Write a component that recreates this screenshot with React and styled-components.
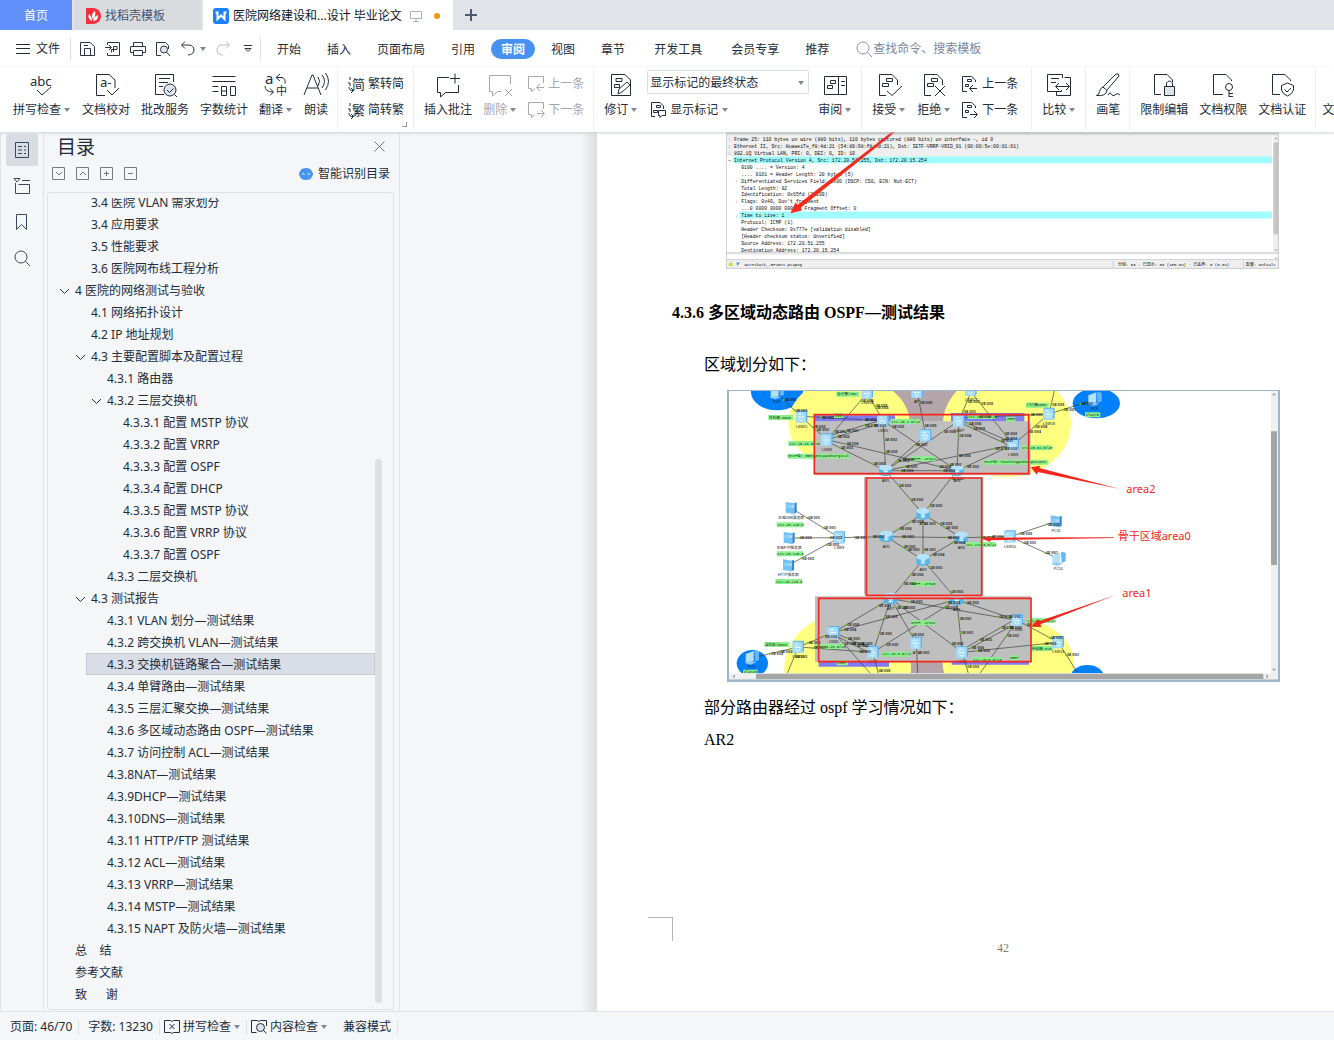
import React from 'react';
import styled, { createGlobalStyle } from 'styled-components';


const GlobalStyle = createGlobalStyle`
    * {
        box-sizing: border-box;
    }

    body {
        margin: 0;
        overflow: hidden;
        color: #232c3b;
        background: #f5f6f8;
        font: 12px/16px 'Noto Sans', 'Noto Sans CJK SC', sans-serif;
    }

    button, input, select {
        margin: 0;
        padding: 0;
        border: 0;
        color: inherit;
        background: none;
        font: inherit;
    }

    a {
        color: inherit;
        text-decoration: none;
    }
`

const AppWrapper = styled.div`
    display: flex;
    flex-direction: column;
    height: 100vh;
`

const Svg = styled.svg`
    display: block;
    flex: none;
    overflow: visible;
    fill: none;
    stroke: currentColor;

    text {
        fill: currentColor;
        stroke: none;
        font-family: 'Noto Sans', 'Noto Sans CJK SC', sans-serif;
    }
`

/* ---------- tab strip ---------- */

const TabStrip = styled.header`
    display: flex;
    flex: none;
    height: 30px;
    background: #e1e3e8;
`

const HomeTab = styled.button`
    width: 72px;
    margin-right: 2px;
    padding-top: 2px;
    color: #fff;
    background: #618ffb;
`

const Tab = styled.button`
    display: flex;
    align-items: center;
    gap: 4px;
    width: ${props => props.$active ? 250 : 127}px;
    margin-right: ${props => props.$active ? 0 : 2}px;
    padding-top: 2px;
    padding-left: ${props => props.$active ? 10 : 11}px;
    color: ${props => props.$active ? '#10151d' : '#48536a'};
    background: ${props => props.$active ? '#fff' : '#dadbdf'};
    white-space: nowrap;
`

const TabState = styled.span`
    display: flex;
    align-items: center;
    gap: 12px;
    margin-left: 4px;
    color: #a9b1c3;
`

const UnsavedDot = styled.span`
    width: 6px;
    height: 6px;
    border-radius: 50%;
    background: #ea9a0b;
`

const NewTab = styled.button`
    display: flex;
    align-items: center;
    justify-content: center;
    width: 36px;
    color: #4b5872;
`

/* ---------- menu bar ---------- */

const MenuBar = styled.nav`
    display: flex;
    flex: none;
    align-items: center;
    height: 37px;
    background: #fff;
    white-space: nowrap;
`

const FileButton = styled.button`
    display: flex;
    align-items: center;
    gap: 5px;
    height: 24px;
    padding: 0 10px 0 15px;
    border-right: 1px solid #dfe2e7;
`

const QuickBar = styled.div`
    display: flex;
    align-items: center;
    gap: 9px;
    height: 24px;
    padding: 0 4px 0 9px;
    border-right: 1px solid #dfe2e7;
`

const QuickButton = styled.button`
    display: flex;
    align-items: center;
    gap: 4px;
    color: ${props => props.$muted ? '#b9bcc2' : '#2c3646'};
`

const MenuList = styled.div`
    display: flex;
    gap: 6px;
    padding-left: 6px;
`

const MenuLink = styled.a`
    padding: 3px 10px 1px;
    padding-left: ${props => props.$wide ? 13 : 10}px;
    border-radius: 10px;
    color: ${props => props.$active ? '#fff' : 'inherit'};
    background: ${props => props.$active ? '#4691f2' : 'none'};
    font-weight: ${props => props.$active ? 700 : 400};
`

const SearchLabel = styled.label`
    display: flex;
    align-items: center;
    gap: 1px;
    margin-left: 17px;
    color: #8a93a8;

    input {
        width: 130px;
        padding-top: 1px;
        outline: none;
    }

    input::placeholder {
        color: #7c869d;
        opacity: 1;
    }
`

/* ---------- ribbon ---------- */

const RibbonWrapper = styled.section`
    position: relative;
    z-index: 1;
    display: flex;
    flex: none;
    height: 65px;
    padding-left: 3px;
    overflow: hidden;
    background: #fff;
    box-shadow: 0 1px 3px #c9ccd2;
    white-space: nowrap;
`

const Group = styled.div`
    position: relative;
    display: flex;
    flex: none;
    gap: ${props => props.$gap || 11}px;
    height: 62px;
    margin-top: 1px;
    padding: 0 ${props => props.$end || 9}px 0 ${props => props.$start || 10}px;
    border-right: 1px solid #eceef1;
`

const BigButton = styled.button`
    display: flex;
    flex-direction: column;
    align-items: center;
    gap: 5px;
    padding-top: 5px;
    color: ${props => props.$muted ? '#a6a8ad' : 'inherit'};
`

const ButtonLabel = styled.span`
    display: flex;
    align-items: center;
    gap: 3px;
    padding-right: ${props => props.$arrow ? 1 : 0}px;
`

const Stack = styled.div`
    display: flex;
    flex-direction: column;
    align-items: flex-start;
    gap: ${props => props.$select ? 7 : 10}px;
    padding-top: ${props => props.$select ? 2 : 7}px;
`

const SmallButton = styled.button`
    display: flex;
    align-items: center;
    gap: 4px;
    height: 18px;
    margin-bottom: -2px;
    padding-left: ${props => props.$indent ? 3 : 0}px;
    color: ${props => props.$muted ? '#a6a8ad' : 'inherit'};
`

const SelectBox = styled.label`
    display: flex;
    align-items: center;
    width: 162px;
    height: 24px;
    padding: 1px 4px 0 2px;
    border: 1px solid #d9dce1;
    border-radius: 2px;

    select {
        flex: 1;
        appearance: none;
        outline: none;
    }
`

const Corner = styled.span`
    position: absolute;
    right: 6px;
    bottom: 3px;
    width: 5px;
    height: 5px;
    border: solid #8b93a3;
    border-width: 0 1px 1px 0;
`

/* ---------- side rail and outline panel ---------- */

const Body = styled.div`
    display: flex;
    flex: 1;
    min-height: 0;
`

const Rail = styled.nav`
    display: flex;
    flex: none;
    flex-direction: column;
    gap: 4px;
    width: 44px;
    padding: 2px 5px;
    border: solid #e0e3e9;
    border-width: 0 1px;
`

const RailButton = styled.button`
    display: flex;
    align-items: center;
    justify-content: center;
    width: 32px;
    height: 32px;
    border-radius: 2px;
    color: #3b475d;
    background: ${props => props.$active ? '#d8dde4' : 'none'};
`

const Panel = styled.aside`
    display: flex;
    flex: none;
    flex-direction: column;
    width: 356px;
    padding: 0 5px 0 3px;
    border-right: 1px solid #e0e3e9;
`

const PanelHead = styled.div`
    display: flex;
    align-items: center;
    justify-content: space-between;
    height: 29px;
    padding: 0 9px 0 10px;

    h2 {
        margin: 0;
        font-size: 19px;
        font-weight: 400;
        line-height: 28px;
    }
`

const PanelTools = styled.div`
    display: flex;
    align-items: center;
    gap: 11px;
    height: 31px;
    padding: 0 4px 6px 5px;
`

const SmartButton = styled.button`
    display: flex;
    align-items: center;
    gap: 5px;
    margin-left: auto;
    padding-top: 1px;
`

const OutlineBox = styled.div`
    display: flex;
    flex: 1;
    min-height: 0;
    margin-bottom: 1px;
    padding: 5px 11px 6px 10px;
    border: 1px solid #dfe2e8;
    border-radius: 3px;
`

const OutlineScroll = styled.div`
    flex: 1;
    overflow: hidden;
`

const OutlineList = styled.ul`
    margin: -7px 0 0;
    padding: 0;
    list-style: none;
`

const OutlineRow = styled.li`
    display: flex;
    align-items: center;
    gap: 6px;
    height: 22px;
    margin-left: ${props => props.$level * 16 - 20}px;
    padding: 2px 0 0 5px;
    border: 1px solid ${props => props.$active ? '#c5cad3' : 'transparent'};
    background: ${props => props.$active ? '#d9dde5' : 'none'};
    white-space: pre;
`

const Chevron = styled.button`
    width: 9px;
    height: 16px;
`

const ChevronSlot = styled.span`
    width: 9px;
`

const ScrollTrack = styled.div`
    flex: none;
    width: 7px;
    padding-top: 261px;
`

const ScrollThumb = styled.div`
    height: 100%;
    border-radius: 4px;
    background: #dddfe2;
`

/* ---------- document ---------- */

const Canvas = styled.main`
    display: flex;
    flex: 1;
    min-width: 0;
    overflow: hidden;
    background: #f5f6f8;
`

const Gutter = styled.div`
    flex: none;
    width: 197px;
    background: linear-gradient(to right, #f5f6f8 180px, #dcdee2 197px);
`

const Page = styled.article`
    flex: 1;
    min-width: 0;
    padding-left: 75px;
    overflow: hidden;
    color: #000;
    background: #fff;
    font: 16px/32px 'Liberation Serif', 'Noto Sans CJK SC', serif;

    h3 {
        margin: 28px 0 20px;
        font-size: 16px;
        line-height: 32px;
    }

    p {
        margin: 0;
        padding-left: 32px;
    }
`

const Figure = styled.figure`
    margin: ${props => props.$top ? 0 : 9}px 0 ${props => props.$top ? 0 : 10}px ${props => props.$top ? 54 : 55}px;

    svg {
        display: block;
        width: 553px;
    }
`

const PageFooter = styled.footer`
    margin-top: 161px;
    color: #7a7a7a;
    font-size: 12px;
    line-height: 14px;
    text-align: center;
`

const CropMark = styled.div`
    width: 25px;
    height: 24px;
    margin-left: -24px;
    border: solid #b4b4b4;
    border-width: 1px 1px 0 0;
`

/* ---------- status bar ---------- */

const StatusBar = styled.footer`
    display: flex;
    flex: none;
    align-items: center;
    height: 29px;
    padding: 2px 0 0 1px;
    border-top: 1px solid #dfe2e8;
    background: #f5f6f8;
    white-space: nowrap;
`

const StatusItem = styled.button`
    display: flex;
    align-items: center;
    gap: 3px;
    height: 15px;
    padding: 0 6px 0 ${props => props.$icon ? 4 : 9}px;
    border-right: 1px solid ${props => props.$open ? 'transparent' : '#dfe2e8'};
`


const DOC = 'M9 22.5H2.5V1.5H15L20.5 7V12';
const BOXES = 'M9.5 5.5h6v3h-6zM5.5 10.5h6v3h-6z';
const TURN = 'M2 1v3M0 7h2v3M1 11q0 4 4 3.500M3 12l2.500 2.500L3 17';

const bigIcons = {
    spell: <><text x="0" y="13" fontSize="13">abc</text><path d="M7 17l5 5 9-8" /></>,
    proof: <><path d="M11 22.5H2.5V1.5H15L21 7v8M13 17l5 5 7-7" /><text x="6" y="14" fontSize="13">a-</text></>,
    correct: (
        <>
            <path d="M11 21.5H2.5V1.5H20.5V9M6 5.5h11M6 9.5h9M6 13.5h4" />
            <circle cx="17" cy="17" r="6" fill="#dfe3ea" />
            <path d="M21.5 21.5L24 24M14 17l2.5 2.5 4-4" />
        </>
    ),
    count: <path d="M.5 3.5h23M.5 8.5h23M.5 13.5h6M.5 18.5h6M9.5 13.5h5v9h-5zM9.5 18h5M18.5 13.5h5v9h-5z" />,
    translate: (
        <>
            <text x="1" y="11" fontSize="15">a</text>
            <text x="12" y="22" fontSize="11">中</text>
            <path d="M16 1l-4 3.5 4 3.5M12.5 4.5H18q4 1 3 6M1 13q0 6 8 6M6 15.5l3.5 3.5L6 22.5" />
        </>
    ),
    read: <path d="M0 22L8 2h1l8 20M3 15h11M14 4q3 4 0 9M18 2q5 6 0 13M21.5 0q6 8 0 17" />,
    comment: <path d="M13 4.5H1.5V19.5H4.5V24L9.5 19.5H22.5V12M14 5.5h10M19 .5v10" />,
    remove: <path d="M22.5 11V2.5H1.5V18.5H4.5V23L9.5 18.5H13M17 16l7 7M24 16l-7 7" />,
    revise: (
        <>
            <path d="M2.5 1.5H16L21.5 7V22.5H2.5zM7 5.5h6v3H7zM5.5 11.5h5v3h-5z" />
            <path d="M9 21l1-5 8-7 3 3-8 7z" fill="#fff" />
        </>
    ),
    pane: <path d="M1.5 3.5h22v18h-22zM15.5 3.5v18M18 8.5h4M18 12.5h4M7.5 7.5h5v3h-5zM4.5 12.5h5v3h-5z" />,
    accept: <path d={`${DOC}${BOXES}M10 18l5 4.5L25 13`} />,
    reject: <path d={`${DOC}${BOXES}M13 13l10 10M23 13L13 23`} />,
    compare: (
        <path d="M14.5 17v1.5H.5V1.5h15V5M9.5 19v3.5h14V4.5h-6M4 5.5h8M4 9.5h5M9 13.5h13M12 10l-3.5 3.5L12 17M19 10l3.5 3.5L19 17" />
    ),
    brush: <path d="M7 14L20 1q3-1 3 2L11 17M7 14l4 3.5q-1 6-10.5 5 3-1 3-4 1-4 3.5-4.5zM12 22q2-4 4 0 2 2 4-1 2-1 4 1" />,
    lock: (
        <>
            <path d="M9 21.5H2.5V1.5H15L20.5 7V9" />
            <path d="M12.5 13.5h10v9h-10z" fill="#dfe3ea" />
            <path d="M14.5 13V10q3-4 6 0v3" />
        </>
    ),
    key: (
        <>
            <path d="M12 21.5H2.5V1.5H15L20.5 7V8" />
            <circle cx="18" cy="14" r="3.5" />
            <path d="M18 17.5V24M18 20.5h4M18 23.5h4" />
        </>
    ),
    shield: <path d="M10 21.5H2.5V1.5H15L20.5 7V8M17.5 10l6 2.5V17q-1 4-6 6-5-2-6-6v-4.5zM14.5 16.5l2.5 2.5 4-4" />,
    finalize: <path d={DOC} />,
}

const smallIcons = {
    toSimple: <><text x="4" y="13" fontSize="13">简</text><path d={TURN} /></>,
    toTraditional: <><text x="4" y="13" fontSize="13">繁</text><path d={TURN} /></>,
    prevNote: <path d="M15.5 7V.5H.5v12h3v3l3.5-3M16 11.5H9M12 8l-3.5 3.5L12 15" />,
    nextNote: <path d="M15.5 7V.5H.5v12h3v3l3.5-3M9 11.5h7M13 8l3.5 3.5L13 15" />,
    marks: <path d="M5 14.5H1.5V.5H10L13.5 4v3M6.5 3.5h4v2h-4zM3.5 8.5h4v2h-4zM8.5 8.5h7v5H12l-2 2v-2H8.5z" />,
    prev: <path d="M5 15.5H.5V.5H9.5L13.5 4v2M5.5 3.5h4v2h-4zM3.5 8.5h3v2h-3zM15 12.5H8M11 9l-3.5 3.5L11 16" />,
    next: <path d="M5 15.5H.5V.5H9.5L13.5 4v2M5.5 3.5h4v2h-4zM3.5 8.5h3v2h-3zM8 12.5h7M12 9l3.5 3.5L12 16" />,
    save: <path d="M.5 14.5V1.5H10l4.500 4v9H.5zM4.5 14V7.5h6V14M4 4.5h4" />,
    exportPdf: <path d="M2.5 4V1.5h12v13h-12V12M0 6.5h6M4 4l2.5 2.5L4 9M8.5 11V5.5h3.5v3H6.5v3" />,
    print: <path d="M3.5 5.5v-4h9v4M3.5 11.5h-3v-6h15v6h-3M3.5 9.5h9v5h-9z" />,
    preview: (
        <>
            <path d="M6 14.5H1.5V1.5h9l3 3V8" />
            <circle cx="9" cy="8.5" r="3.5" fill="#dfe3ea" />
            <path d="M11.5 11l3.5 4" />
        </>
    ),
    undo: <path d="M5 .5L1.5 4 5 7.5M2 4h7q5 .5 5 5t-6 5" />,
    redo: <path d="M11 .5L14.5 4 11 7.5M14 4H7q-5 .5-5 5t6 5" />,
    spellBook: <path d="M8 2.5L6.5 1.5H.5v12h6l1.5 1 1.5-1h6v-12h-6zM5.5 5l5 5M10.5 5l-5 5" />,
    contentBook: (
        <>
            <path d="M15.5 7V1.5h-6L8 2.5 6.5 1.5H.5v12h5" />
            <circle cx="9.5" cy="8.5" r="4" fill="#dfe3ea" />
            <path d="M12.5 11.5l3 3" />
        </>
    ),
    outline: <path d="M1.5.5h13v15h-13zM4 4.5h4M10 4.5h2M4 8h4M10 8h2M4 11.5h4M10 11.5h2" />,
    chapters: <path d="M0 .5h6L3 4zM8 2.5h8M1.5 5v10.5h14v-9h-11" />,
    bookmark: <path d="M2.5.5h10v15l-5-5-5 5z" />,
    search: <><circle cx="7" cy="7" r="6" /><path d="M11.5 11.5L16 16" /></>,
}

const Icon = ({ name }) => (
    <Svg
        width={bigIcons[name] ? 24 : 16}
        height={bigIcons[name] ? 24 : 16}
        viewBox={bigIcons[name] ? '0 0 24 24' : '0 0 16 16'}
        aria-hidden="true"
    >
        {bigIcons[name] || smallIcons[name]}
    </Svg>
)

const Arrow = () => (
    <Svg width="6" height="4" viewBox="0 0 6 4" aria-hidden="true">
        <path d="M0 0h6L3 4z" fill="#7d879b" stroke="none" />
    </Svg>
)

const Big = ({ icon, label, arrow, muted }) => (
    <BigButton $muted={muted}>
        <Icon name={icon} />
        <ButtonLabel $arrow={arrow}>{label}{arrow && <Arrow />}</ButtonLabel>
    </BigButton>
)

const Small = ({ icon, label, arrow, muted, indent }) => (
    <SmallButton $muted={muted} $indent={indent}>
        <Icon name={icon} />{label}{arrow && <Arrow />}
    </SmallButton>
)

const menus = [
    ['开始'], ['插入'], ['页面布局'], ['引用'], ['审阅'], ['视图'],
    ['章节'], ['开发工具', true], ['会员专享', true], ['推荐'],
]

// [level, title, expandable]
const outline = [
    [2, '3.4 医院 VLAN 需求划分'],
    [2, '3.4 应用要求'],
    [2, '3.5 性能要求'],
    [2, '3.6 医院网布线工程分析'],
    [1, '4 医院的网络测试与验收', true],
    [2, '4.1 网络拓扑设计'],
    [2, '4.2 IP 地址规划'],
    [2, '4.3 主要配置脚本及配置过程', true],
    [3, '4.3.1 路由器'],
    [3, '4.3.2 三层交换机', true],
    [4, '4.3.3.1 配置 MSTP 协议'],
    [4, '4.3.3.2 配置 VRRP'],
    [4, '4.3.3.3 配置 OSPF'],
    [4, '4.3.3.4 配置 DHCP'],
    [4, '4.3.3.5 配置 MSTP 协议'],
    [4, '4.3.3.6 配置 VRRP 协议'],
    [4, '4.3.3.7 配置 OSPF'],
    [3, '4.3.3 二层交换机'],
    [2, '4.3 测试报告', true],
    [3, '4.3.1 VLAN 划分—测试结果'],
    [3, '4.3.2 跨交换机 VLAN—测试结果'],
    [3, '4.3.3 交换机链路聚合—测试结果'],
    [3, '4.3.4 单臂路由—测试结果'],
    [3, '4.3.5 三层汇聚交换—测试结果'],
    [3, '4.3.6 多区域动态路由 OSPF—测试结果'],
    [3, '4.3.7 访问控制 ACL—测试结果'],
    [3, '4.3.8NAT—测试结果'],
    [3, '4.3.9DHCP—测试结果'],
    [3, '4.3.10DNS—测试结果'],
    [3, '4.3.11 HTTP/FTP 测试结果'],
    [3, '4.3.12 ACL—测试结果'],
    [3, '4.3.13 VRRP—测试结果'],
    [3, '4.3.14 MSTP—测试结果'],
    [3, '4.3.15 NAPT 及防火墙—测试结果'],
    [1, '总    结'],
    [1, '参考文献'],
    [1, '致      谢'],
]
const ACTIVE_ROW = 21;

const packet = [
    [0, 'Frame 25: 110 bytes on wire (880 bits), 110 bytes captured (880 bits) on interface -, id 0', 1],
    [0, 'Ethernet II, Src: HuaweiTe_f8:4d:21 (54:89:98:f8:4d:21), Dst: IETF-VRRP-VRID_01 (00:00:5e:00:01:01)', 1],
    [0, '802.1Q Virtual LAN, PRI: 0, DEI: 0, ID: 10', 1],
    [0, 'Internet Protocol Version 4, Src: 172.20.51.255, Dst: 172.20.15.254', 2],
    [1, '0100 .... = Version: 4'],
    [1, '.... 0101 = Header Length: 20 bytes (5)'],
    [1, 'Differentiated Services Field: 0x00 (DSCP: CS0, ECN: Not-ECT)', 1],
    [1, 'Total Length: 92'],
    [1, 'Identification: 0x65fd (26109)'],
    [1, "Flags: 0x40, Don't fragment", 1],
    [1, '...0 0000 0000 0000 = Fragment Offset: 0'],
    [1, 'Time to Live: 1', 1],
    [1, 'Protocol: ICMP (1)'],
    [1, 'Header Checksum: 0x777e [validation disabled]'],
    [1, '[Header checksum status: Unverified]'],
    [1, 'Source Address: 172.20.51.255'],
    [1, 'Destination Address: 172.20.15.254'],
]

const PacketCapture = () => (
    <svg viewBox="0 0 2765 685" fontFamily="'Liberation Mono', 'Noto Sans CJK SC', monospace" fontSize="24" fill="#0c0c0c">
        <path d="M0 0h2765v685H0z" fill="#fff" />
        <path d="M0 0h2765v14H0z" fill="#c4c4c4" />
        <path d="M0 14h2730v108H0zM2735 14h30v590h-30zM0 602h2765v12H0zM0 640h2765v42H0z" fill="#efefef" />
        <path d="M2737 52h26v460h-26z" fill="#c6c6c6" />
        <path d="M35 122h2695v34H35zM68 398h2662v34H68z" fill="#9ffcff" />
        <path d="M2 0v682M2762 0v682M0 604h2765M0 638h2765M0 682h2765" stroke="#c2c2c2" strokeWidth="4" />
        {packet.map(([level, line, mark], i) => {
            const y = 46 + i * 34.5;
            const x = level ? 50 : 14;
            return (
                <g key={line}>
                    {mark === 1 && <path d={`M${x} ${y - 14}l6 7-6 7`} fill="none" stroke="#888" strokeWidth="2" />}
                    {mark === 2 && <path d={`M${x - 2} ${y - 10}l6 7 6-7`} fill="none" stroke="#444" strokeWidth="3" />}
                    <text x={level ? 76 : 40} y={y}>{line}</text>
                </g>
            );
        })}
        <path d="M846 0L372 380 380 392 322 406 348 352 358 364 828 0z" fill="#f22b1d" />
        <circle cx="24" cy="661" r="10" fill="#d9d44a" />
        <path d="M52 652h18l-14 18z" fill="#5793c8" />
        <g fontSize="20">
            <text x="92" y="669">wireshark_-RP1BY1.pcapng</text>
            <text x="1960" y="669">分组: 66 · 已显示: 66 (100.0%) · 已丢弃: 0 (0.0%)</text>
            <text x="2600" y="669">配置: Default</text>
        </g>
        <path d="M1936 646v32M2588 646v32" stroke="#bbb" strokeWidth="3" />
        <path d="M2744 36l6-7 6 7M2744 586l6 7 6-7M2744 626l6 7 6-7" fill="none" stroke="#666" strokeWidth="3" />
    </svg>
)

// [x1, y1, x2, y2]
const links = [
    [155, 15, 230, 88], [230, 88, 306, 155], [230, 85, 474, 98], [427, 15, 306, 155], [427, 15, 474, 98],
    [306, 145, 474, 95], [306, 155, 474, 105], [306, 160, 482, 248], [306, 155, 696, 248], [577, 14, 602, 142],
    [602, 142, 482, 248], [474, 98, 482, 248], [474, 98, 696, 248], [702, 98, 696, 248], [702, 98, 482, 248],
    [738, 12, 702, 98], [738, 12, 865, 170], [702, 90, 972, 78], [702, 95, 865, 165], [702, 102, 865, 178],
    [865, 170, 482, 248], [865, 170, 696, 248], [482, 248, 696, 248], [865, 170, 972, 78], [972, 78, 990, 0],
    [972, 78, 1108, 35], [482, 248, 594, 378], [696, 248, 594, 378], [594, 378, 484, 446], [594, 378, 709, 449],
    [594, 378, 594, 516], [484, 446, 709, 449], [484, 446, 594, 516], [709, 449, 594, 516], [343, 449, 484, 446],
    [198, 360, 343, 449], [192, 450, 343, 449], [190, 532, 343, 449], [709, 449, 855, 446], [855, 446, 993, 400],
    [855, 446, 1000, 512], [594, 516, 497, 632], [594, 516, 695, 635], [497, 632, 326, 733], [497, 632, 444, 793],
    [497, 632, 574, 765], [497, 632, 712, 793], [497, 632, 877, 697], [695, 635, 326, 733], [695, 635, 444, 793],
    [695, 635, 712, 793], [695, 635, 877, 697], [326, 733, 444, 785], [326, 740, 444, 800], [326, 733, 220, 777],
    [220, 777, 444, 793], [220, 777, 80, 810], [220, 777, 187, 856], [326, 733, 436, 856], [444, 793, 460, 856],
    [574, 765, 578, 856], [712, 793, 730, 856], [712, 785, 877, 690], [712, 793, 877, 705], [712, 793, 1000, 763],
    [877, 697, 765, 856], [877, 697, 1000, 763], [1000, 763, 1056, 852],
]

// [kind, x, y, label]
const nodes = [
    ['pc', 155, 12, 'PC6'], ['switch', 230, 86, 'LSW15'], ['switch', 306, 155, 'LSW6'], ['switch', 427, 15, 'LSW16'],
    ['switch', 474, 98, 'LSW5'], ['switch', 577, 12, 'AP1'], ['switch', 602, 142, ''], ['switch', 702, 98, 'LSW7'],
    ['switch', 738, 6, 'LSW17'], ['router', 482, 248, 'AR5'], ['router', 696, 248, 'AR6'], ['router', 594, 378, 'AR2'],
    ['switch', 972, 78, 'LSW18'], ['switch', 865, 170, 'LSW8'], ['pc', 1108, 32, 'PC9'], ['server', 198, 360, '本地DNS服务器'],
    ['server', 192, 450, '本地FTP服务器'], ['server', 190, 532, 'HTTP服务器'], ['switch', 343, 449, 'LSW9'],
    ['router', 484, 446, 'AR1'], ['router', 709, 449, 'AR4'], ['router', 594, 516, 'AR3'], ['router', 497, 632, 'AR7'],
    ['router', 695, 635, 'AR8'], ['switch', 326, 733, 'LSW1'], ['switch', 444, 793, 'LSW2'], ['switch', 574, 765, 'AC1'],
    ['switch', 712, 793, 'LSW3'], ['switch', 220, 777, 'LSW11'], ['pc', 80, 808, 'PC1'], ['server', 993, 400, 'PC31'],
    ['switch', 855, 446, 'LSW10'], ['pc', 1000, 512, 'PC10'], ['switch', 877, 697, 'LSW4'], ['switch', 1000, 763, 'LSW14'],
]

// [x, y, width, text]
const tags = [
    [334, 11, 68, '急诊楼/254'], [130, 81, 74, '外科楼:8888'], [327, 75, 28, 'VRRP'], [497, 93, 88, '172.20.2.0/24'],
    [190, 159, 90, '172.20.16.0/20'], [188, 197, 184, 'MSTP组: EmergencyAndSurgical'], [557, 205, 74, 'OSPF: area2'],
    [728, 78, 82, '172.20.7.0/24'], [776, 215, 46, 'MSTP组:'], [824, 215, 146, 'TeachingAndOutpatient'], [903, 44, 68, '门诊楼8888'],
    [843, 86, 28, 'VRRP'], [888, 172, 92, '172.20.32.0/20'], [1080, 73, 46, 'vlan70'], [155, 403, 80, '172.20.220.5'],
    [155, 490, 80, '172.20.220.6'], [151, 573, 80, '172.20.220.5'], [720, 462, 92, '111.211.0.5/24'], [557, 580, 74, 'OSPF: area0'],
    [557, 697, 74, 'OSPF: area1'], [118, 762, 74, '全科区/6888'], [268, 768, 88, '172.20.48.0/20'], [470, 791, 86, '172.20.8.0/21'],
    [335, 817, 34, 'VRRP'], [742, 807, 86, '172.20.0.0/23'], [852, 802, 28, 'VRRP'], [905, 690, 84, '172.20.4.0/22'],
    [918, 774, 66, '传染楼:816'], [54, 845, 44, 'vlan10'],
]

const Node = ({ kind, x, y, label }) => (
    <g transform={`translate(${x} ${y})`}>
        {kind === 'router' && (
            <g>
                <path d="M-20-9v20q20 12 40 0V-9z" fill="#55b4e8" />
                <ellipse cy="-9" rx="20" ry="9" fill="#b4e4fb" />
                <path d="M-7 3h14M0-3v14M-7 9h14" stroke="#e6f8ff" strokeWidth="3" />
            </g>
        )}
        {kind === 'switch' && (
            <g>
                <path d="M-18-16l5-3h30v30l-4 7z" fill="#5fb1ea" />
                <path d="M-18-16h31v34h-31z" fill="#a3dcfa" />
                <path d="M-11-5l6-5 6 5M-8 7l6 5 7-5M-11 1h18" fill="none" stroke="#f2fcff" strokeWidth="3" />
            </g>
        )}
        {kind === 'server' && (
            <g>
                <path d="M-16-18l26 4v32l-26-4z" fill="#72c2f5" />
                <path d="M10-14l7-3v30l-7 5z" fill="#2f86d6" />
                <text x="-3" y="1" fontSize="10" textAnchor="middle" fill="#e9f7ff">.COM</text>
            </g>
        )}
        {kind === 'pc' && (
            <g>
                <path d="M-18-10l24-9v30l-24 6z" fill="#b5e2fa" />
                <path d="M8-21l14 3v26l-12 5z" fill="#68b5ef" />
                <path d="M-22 16l18-5 18 4-18 7z" fill="#8fcbf3" />
            </g>
        )}
        <text y="33" fontSize="11" textAnchor="middle" fill="#111">{label}</text>
    </g>
)

const Topology = () => (
    <svg viewBox="6 6 1659 876" fontFamily="'Liberation Sans', 'Noto Sans CJK SC', sans-serif">
        <clipPath id="map"><path d="M12 9h1626v847H12z" /></clipPath>
        <path d="M6 6h1659v876H6z" fill="#9eb6c9" />
        <path d="M12 9h1647v865H12z" fill="#fff" />
        <g clipPath="url(#map)">
            <ellipse cx="156" cy="12" rx="78" ry="55" fill="#0080fb" />
            <path d="M490 6h230v95H490zM540 815h130v45H540z" fill="#b3a5aa" />
            <ellipse cx="372" cy="105" rx="182" ry="139" fill="#ffff80" />
            <ellipse cx="846" cy="108" rx="192" ry="160" fill="#ffff80" />
            <ellipse cx="368" cy="840" rx="190" ry="165" fill="#ffff80" />
            <ellipse cx="850" cy="825" rx="197" ry="140" fill="#ffff80" />
            <ellipse cx="82" cy="826" rx="47" ry="40" fill="#0080fb" />
            <ellipse cx="1114" cy="46" rx="71" ry="45" fill="#0080fb" />
            <ellipse cx="1087" cy="866" rx="50" ry="35" fill="#0080fb" />
            <path d="M268 100h649v162H268zM417 267h358v353H417zM270 625h648v197H270z" fill="#bfbfbf" />
            <path d="M268 82h242v18H268zM678 75h220v25H678zM281 822h211v14H281zM680 822h232v8H680z" fill="#7f7cf5" />
            <g stroke="#3a3a3a" strokeWidth="2">
                {links.map(([x1, y1, x2, y2], i) => <path key={i} d={`M${x1} ${y1}L${x2} ${y2}`} />)}
            </g>
            {tags.map(([x, y, width, text]) => (
                <g key={`${x}-${y}`}>
                    <path d={`M${x} ${y}h${width}v15h${-width}z`} fill="#8af08c" />
                    <text x={x + 2} y={y + 11} fontSize="11" fontFamily="'Liberation Mono', 'Noto Sans CJK SC', monospace" fill="#142814">
                        {text}
                    </text>
                </g>
            ))}
            {nodes.map(([kind, x, y, label]) => <Node key={`${x}-${y}`} kind={kind} x={x} y={y} label={label} />)}
            {links.map(([x1, y1, x2, y2], i) => {
                const reach = (30 + i % 3 * 14) / Math.hypot(x2 - x1, y2 - y1);
                // stubs that leave the map only carry the port at the device end
                const ends = y2 > 850 || y2 === 0 ? [reach] : [reach, 1 - reach];
                return ends.map(t => {
                    const x = Math.round(x1 + (x2 - x1) * t);
                    const y = Math.round(y1 + (y2 - y1) * t);
                    return (
                        <g key={`${i}-${t}`}>
                            <text x={x + 3} y={y + 4} fontSize="9" fontWeight="700" fill="#151515">GE 0/0/{i % 5 + 1}</text>
                            <circle cx={x} cy={y} r="3" fill="#6cc52c" />
                        </g>
                    );
                });
            })}
            <path d="M268 80h643v177H268zM424 270h346v352H424zM281 631h637v190H281z" fill="none" stroke="#f5261c" strokeWidth="5" />
            <g fill="#f5261c">
                <path d="M917 238l28-5-2 7 242 63-246-51-3 8zM772 453l24-9v5l370-1v2l-370 7v5zM919 716l19-23 4 7 230-79-226 88 3 8z" />
                <g fontFamily="'Noto Sans', 'Noto Sans CJK SC', sans-serif" fontSize="33">
                    <text x="1204" y="316">area2</text>
                    <text x="1178" y="457">骨干区域area0</text>
                    <text x="1192" y="628">area1</text>
                </g>
            </g>
        </g>
        <path d="M1638 9h21v847h-21zM12 856h1647v18H12z" fill="#f0f0f0" />
        <path d="M1638 130h18v401h-18zM93 857h1522v16H93z" fill="#a5a5a5" />
        <path d="M1643 22l4-5 4 5M1643 842l4 5 4-5M30 861l-5 4 5 4M1624 861l5 4-5 4" fill="none" stroke="#444" strokeWidth="2" />
    </svg>
)


export default class App extends React.Component {

    state = {
        view: '显示标记的最终状态',
    }

    handleView = (event) => {
        this.setState({ view: event.target.value });
    }

    renderTabs() {
        return (
            <TabStrip>
                <HomeTab>首页</HomeTab>
                <Tab>
                    <Svg width="16" height="16" viewBox="0 0 16 16">
                        <path d="M1 0h7a8 8 0 010 16H1z" fill="#f6303b" stroke="none" />
                        <path d="M7 13C3 11 3 8 4 6c2 2 3 4 3 7zM7.5 11C6 7 8 4 10 3c1 3 0 6-2.5 8zM8 13c0-3 2-5 5-6 0 3-1 6-5 6z" fill="#fff" stroke="none" />
                    </Svg>
                    找稻壳模板
                </Tab>
                <Tab $active>
                    <Svg width="16" height="16" viewBox="0 0 16 16">
                        <rect width="16" height="16" rx="3" fill="#1c82f8" stroke="none" />
                        <path d="M2.5 4.5H4.500V11L8 7.5 11.5 11V4.5h2" stroke="#fff" strokeWidth="2" />
                    </Svg>
                    医院网络建设和...设计 毕业论文
                    <TabState>
                        <Svg width="12" height="12" viewBox="0 0 12 12">
                            <path d="M.5 1.5h11v7H.5zM6 8.5v3M3 11.5h6" />
                        </Svg>
                        <UnsavedDot />
                    </TabState>
                </Tab>
                <NewTab aria-label="新建">
                    <Svg width="12" height="12" viewBox="0 0 12 12" strokeWidth="2"><path d="M6 0v12M0 6h12" /></Svg>
                </NewTab>
            </TabStrip>
        );
    }

    renderMenu() {
        return (
            <MenuBar>
                <FileButton>
                    <Svg width="16" height="12" viewBox="0 0 16 12"><path d="M1 1.5h14M1 5.5h14M1 10.5h14" /></Svg>
                    文件
                </FileButton>
                <QuickBar>
                    <QuickButton aria-label="保存"><Icon name="save" /></QuickButton>
                    <QuickButton aria-label="输出为PDF"><Icon name="exportPdf" /></QuickButton>
                    <QuickButton aria-label="打印"><Icon name="print" /></QuickButton>
                    <QuickButton aria-label="打印预览"><Icon name="preview" /></QuickButton>
                    <QuickButton aria-label="撤销"><Icon name="undo" /><Arrow /></QuickButton>
                    <QuickButton aria-label="恢复" $muted><Icon name="redo" /></QuickButton>
                    <QuickButton aria-label="更多">
                        <Svg width="16" height="8" viewBox="0 0 16 8"><path d="M4 .5h8M5 3.5h6l-3 3z" /></Svg>
                    </QuickButton>
                </QuickBar>
                <MenuList>
                    {menus.map(([label, wide]) => (
                        <MenuLink key={label} href="#ribbon" $wide={wide} $active={label === '审阅'}>{label}</MenuLink>
                    ))}
                </MenuList>
                <SearchLabel>
                    <Icon name="search" />
                    <input type="text" placeholder="查找命令、搜索模板" aria-label="查找命令、搜索模板" />
                </SearchLabel>
            </MenuBar>
        );
    }

    renderRibbon() {
        return (
            <RibbonWrapper id="ribbon">
                <Group>
                    <Big icon="spell" label="拼写检查" arrow />
                    <Big icon="proof" label="文档校对" />
                    <Big icon="correct" label="批改服务" />
                    <Big icon="count" label="字数统计" />
                    <Big icon="translate" label="翻译" arrow />
                    <Big icon="read" label="朗读" />
                </Group>
                <Group>
                    <Stack>
                        <Small icon="toSimple" label="繁转简" />
                        <Small icon="toTraditional" label="简转繁" />
                    </Stack>
                    <Corner />
                </Group>
                <Group>
                    <Big icon="comment" label="插入批注" />
                    <Big icon="remove" label="删除" arrow muted />
                    <Stack>
                        <Small icon="prevNote" label="上一条" muted />
                        <Small icon="nextNote" label="下一条" muted />
                    </Stack>
                </Group>
                <Group $gap={9}>
                    <Big icon="revise" label="修订" arrow />
                    <Stack $select>
                        <SelectBox>
                            <select aria-label="显示状态" value={this.state.view} onChange={this.handleView}>
                                <option>显示标记的最终状态</option>
                                <option>最终状态</option>
                            </select>
                            <Arrow />
                        </SelectBox>
                        <Small icon="marks" label="显示标记" arrow indent />
                    </Stack>
                    <Big icon="pane" label="审阅" arrow />
                </Group>
                <Group $end={13}>
                    <Big icon="accept" label="接受" arrow />
                    <Big icon="reject" label="拒绝" arrow />
                    <Stack>
                        <Small icon="prev" label="上一条" />
                        <Small icon="next" label="下一条" />
                    </Stack>
                </Group>
                <Group>
                    <Big icon="compare" label="比较" arrow />
                </Group>
                <Group>
                    <Big icon="brush" label="画笔" />
                </Group>
                <Group>
                    <Big icon="lock" label="限制编辑" />
                    <Big icon="key" label="文档权限" />
                    <Big icon="shield" label="文档认证" />
                </Group>
                <Group $start={6}>
                    <Big icon="finalize" label="文档定稿" />
                </Group>
            </RibbonWrapper>
        );
    }

    renderOutline() {
        return (
            <Panel>
                <PanelHead>
                    <h2>目录</h2>
                    <button aria-label="关闭">
                        <Svg width="11" height="11" viewBox="0 0 11 11"><path d="M.5.5l10 10M10.5.5l-10 10" stroke="#6d7686" /></Svg>
                    </button>
                </PanelHead>
                <PanelTools>
                    {[['展开', 'M4 5l3 3 3-3'], ['收起', 'M4 8l3-3 3 3'], ['增加', 'M4 6.5h5M6.5 4v5'], ['减少', 'M4 6.5h5']].map(([label, d]) => (
                        <button key={label} aria-label={label}>
                            <Svg width="13" height="13" viewBox="0 0 13 13">
                                <path d={`M.5.5h12v12H.5z${d}`} stroke="#737a86" />
                            </Svg>
                        </button>
                    ))}
                    <SmartButton>
                        <Svg width="14" height="12" viewBox="0 0 14 12">
                            <path d="M7 0q5 0 6 3.500 2 2.500 0 5Q12 12 7 12T1 8.500q-2-2.500 0-5Q2 0 7 0z" fill="#4a94f1" stroke="none" />
                            <path d="M3 6.500q1-2 2.500 0M8.500 6.500q1.500-2 2.500 0" stroke="#fff" />
                        </Svg>
                        智能识别目录
                    </SmartButton>
                </PanelTools>
                <OutlineBox>
                    <OutlineScroll>
                        <OutlineList>
                            {outline.map(([level, title, open], i) => (
                                <OutlineRow key={title} $level={level} $active={i === ACTIVE_ROW}>
                                    {open
                                        ? (
                                            <Chevron aria-label="折叠">
                                                <Svg width="9" height="16" viewBox="0 0 9 16"><path d="M0 6l4.5 4.5L9 6" /></Svg>
                                            </Chevron>
                                        )
                                        : <ChevronSlot />
                                    }
                                    <a href="#page">{title}</a>
                                </OutlineRow>
                            ))}
                        </OutlineList>
                    </OutlineScroll>
                    <ScrollTrack><ScrollThumb /></ScrollTrack>
                </OutlineBox>
            </Panel>
        );
    }

    render() {
        return (
            <AppWrapper>
                <GlobalStyle />
                {this.renderTabs()}
                {this.renderMenu()}
                {this.renderRibbon()}

                <Body>
                    <Rail>
                        <RailButton $active aria-label="目录"><Icon name="outline" /></RailButton>
                        <RailButton aria-label="章节"><Icon name="chapters" /></RailButton>
                        <RailButton aria-label="书签"><Icon name="bookmark" /></RailButton>
                        <RailButton aria-label="查找"><Icon name="search" /></RailButton>
                    </Rail>
                    {this.renderOutline()}

                    <Canvas>
                        <Gutter />
                        <Page id="page">
                            <Figure $top><PacketCapture /></Figure>
                            <h3>4.3.6 多区域动态路由 OSPF—测试结果</h3>
                            <p>区域划分如下：</p>
                            <Figure><Topology /></Figure>
                            <p>部分路由器经过 ospf 学习情况如下：</p>
                            <p>AR2</p>
                            <PageFooter>
                                <CropMark />
                                42
                            </PageFooter>
                        </Page>
                    </Canvas>
                </Body>

                <StatusBar>
                    <StatusItem>页面: 46/70</StatusItem>
                    <StatusItem>字数: 13230</StatusItem>
                    <StatusItem $icon><Icon name="spellBook" />拼写检查<Arrow /></StatusItem>
                    <StatusItem $icon $open><Icon name="contentBook" />内容检查<Arrow /></StatusItem>
                    <StatusItem>兼容模式</StatusItem>
                </StatusBar>
            </AppWrapper>
        );
    }
}
